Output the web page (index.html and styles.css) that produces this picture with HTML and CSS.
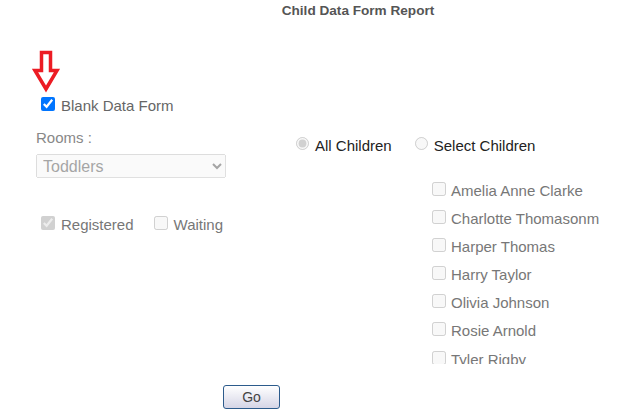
FILE: index.html
```html
<!DOCTYPE html>
<html lang="en">
<head>
    <meta charset="UTF-8">
    <title>Child Data Form Report</title>
    <link rel="stylesheet" href="styles.css">
</head>
<body>

<h1 class="title">Child Data Form Report</h1>

<svg class="marker" width="30" height="46" viewBox="0 0 30 46">
    <path d="M9.5 4.5 H18.5 V22.5 H25 L14 41 L3 22.5 H9.5 Z" fill="#fff" stroke="#ec1c24" stroke-width="3.5" stroke-linejoin="miter"/>
</svg>

<div class="blank-row">
    <label class="check"><input type="checkbox" checked><span>Blank Data Form</span></label>
</div>

<div class="main">
    <div class="left-col">
        <div class="rooms-label">Rooms :</div>
        <select class="rooms" disabled>
            <option>Toddlers</option>
        </select>
        <div class="status-row">
            <label class="check"><input type="checkbox" checked disabled><span>Registered</span></label>
            <label class="check waiting"><input type="checkbox" disabled><span>Waiting</span></label>
        </div>
    </div>

    <div class="right-col">
        <div class="radio-row">
            <label class="radio"><input type="radio" name="children" checked disabled><span>All Children</span></label>
            <label class="radio select-radio"><input type="radio" name="children" disabled><span>Select Children</span></label>
        </div>
        <div class="child-list">
            <label class="check child"><input type="checkbox" disabled><span>Amelia Anne Clarke</span></label>
            <label class="check child"><input type="checkbox" disabled><span>Charlotte Thomasonm</span></label>
            <label class="check child"><input type="checkbox" disabled><span>Harper Thomas</span></label>
            <label class="check child"><input type="checkbox" disabled><span>Harry Taylor</span></label>
            <label class="check child"><input type="checkbox" disabled><span>Olivia Johnson</span></label>
            <label class="check child"><input type="checkbox" disabled><span>Rosie Arnold</span></label>
            <label class="check child"><input type="checkbox" disabled><span>Tyler Rigby</span></label>
        </div>
    </div>
</div>

<div class="actions">
    <button type="button" class="go-btn">Go</button>
</div>

</body>
</html>
```

FILE: styles.css
```css
body {
    margin: 0;
    font-family: "Liberation Sans", Arial, sans-serif;
    font-size: 15px;
    color: #666;
    background: #fff;
}
.title {
    margin: 0;
    padding: 3px 0 0 90px;
    text-align: center;
    font-size: 13.6px;
    line-height: 16px;
    font-weight: 700;
    color: #555;
}
.marker {
    display: block;
    margin: 29px 0 0 32px;
}
.check {
    display: flex;
    align-items: center;
}
.check input {
    width: 14px;
    height: 14px;
    margin: 0 6px 3px 4px;
}
.blank-row {
    display: flex;
    height: 22px;
    margin: 0 0 0 37px;
    color: #666;
}
.main {
    display: flex;
    padding-left: 36px;
    margin-top: 13px;
}
.left-col {
    width: 190px;
}
.left-col .check input {
    margin-left: 5px;
}
.rooms-label {
    line-height: 18px;
    color: #888;
}
.rooms {
    display: block;
    width: 190px;
    height: 24px;
    margin-top: 7px;
    padding: 0 2px;
    font-family: inherit;
    font-size: 16px;
}
.status-row {
    display: flex;
    height: 22px;
    margin-top: 35px;
    color: #777;
}
.waiting {
    margin-left: 15px;
}
.right-col {
    margin-left: 65px;
}
.radio-row {
    display: flex;
    height: 22px;
    margin-top: 5px;
    color: #222;
}
.radio {
    display: flex;
    align-items: center;
}
.radio input {
    margin: 0 6px 3px 5px;
}
.select-radio {
    margin-left: 18px;
}
.child-list {
    height: 188px;
    margin-top: 20px;
    padding-left: 137px;
    overflow: hidden;
    color: #777;
}
.child {
    height: 28.17px;
    white-space: nowrap;
}
.child input {
    margin-right: 5px;
}
.actions {
    padding: 21px 0 0 223px;
}
.go-btn {
    width: 57px;
    height: 24px;
    padding: 0;
    border: 1px solid #2c5b8c;
    border-radius: 3px;
    background: linear-gradient(#ffffff, #d5d5e6);
    font-family: inherit;
    font-size: 14px;
    color: #444;
}
```
